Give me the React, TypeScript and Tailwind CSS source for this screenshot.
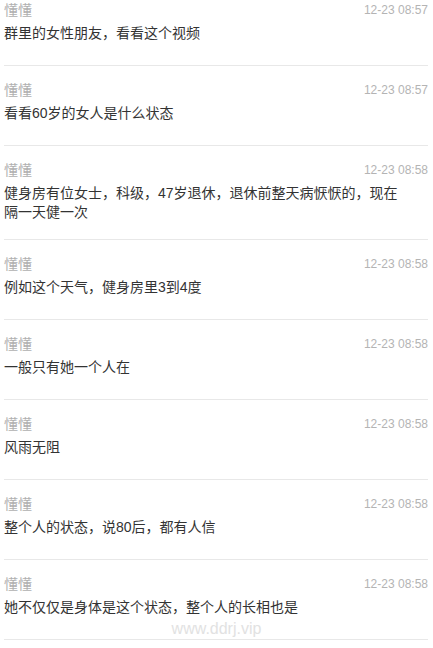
const messages = [
  { name: '懂懂', time: '12-23 08:57', text: '群里的女性朋友，看看这个视频' },
  { name: '懂懂', time: '12-23 08:57', text: '看看60岁的女人是什么状态' },
  { name: '懂懂', time: '12-23 08:58', text: '健身房有位女士，科级，47岁退休，退休前整天病恹恹的，现在隔一天健一次' },
  { name: '懂懂', time: '12-23 08:58', text: '例如这个天气，健身房里3到4度' },
  { name: '懂懂', time: '12-23 08:58', text: '一般只有她一个人在' },
  { name: '懂懂', time: '12-23 08:58', text: '风雨无阻' },
  { name: '懂懂', time: '12-23 08:58', text: '整个人的状态，说80后，都有人信' },
  { name: '懂懂', time: '12-23 08:58', text: '她不仅仅是身体是这个状态，整个人的长相也是' },
];

export default function App() {
  return (
    <div className="relative h-[648px] w-[433px] overflow-hidden bg-white font-['Liberation_Sans','Noto_Sans_CJK_SC',sans-serif]">
      <div className="-mt-[14px] pl-[4px] pr-[5px]">
        {messages.map((m, i) => (
          <div key={i} className="min-h-[80px] border-b border-[#e8e8e8] pt-[14px] pb-[17px]">
            <div className="flex items-center justify-between">
              <span className="text-[14px] leading-[20px] text-[#b0b0b0]">{m.name}</span>
              <span className="text-[12px] leading-[20px] text-[#b4b4b4]">{m.time}</span>
            </div>
            <p className="mt-[4px] pr-[20px] text-[14px] leading-[19px] text-[#333]">{m.text}</p>
          </div>
        ))}
      </div>
      {/* watermark */}
      <div className="absolute left-0 right-0 top-[617px] text-center text-[16px] text-[#e2e2e2]">
        www.ddrj.vip
      </div>
    </div>
  );
}
